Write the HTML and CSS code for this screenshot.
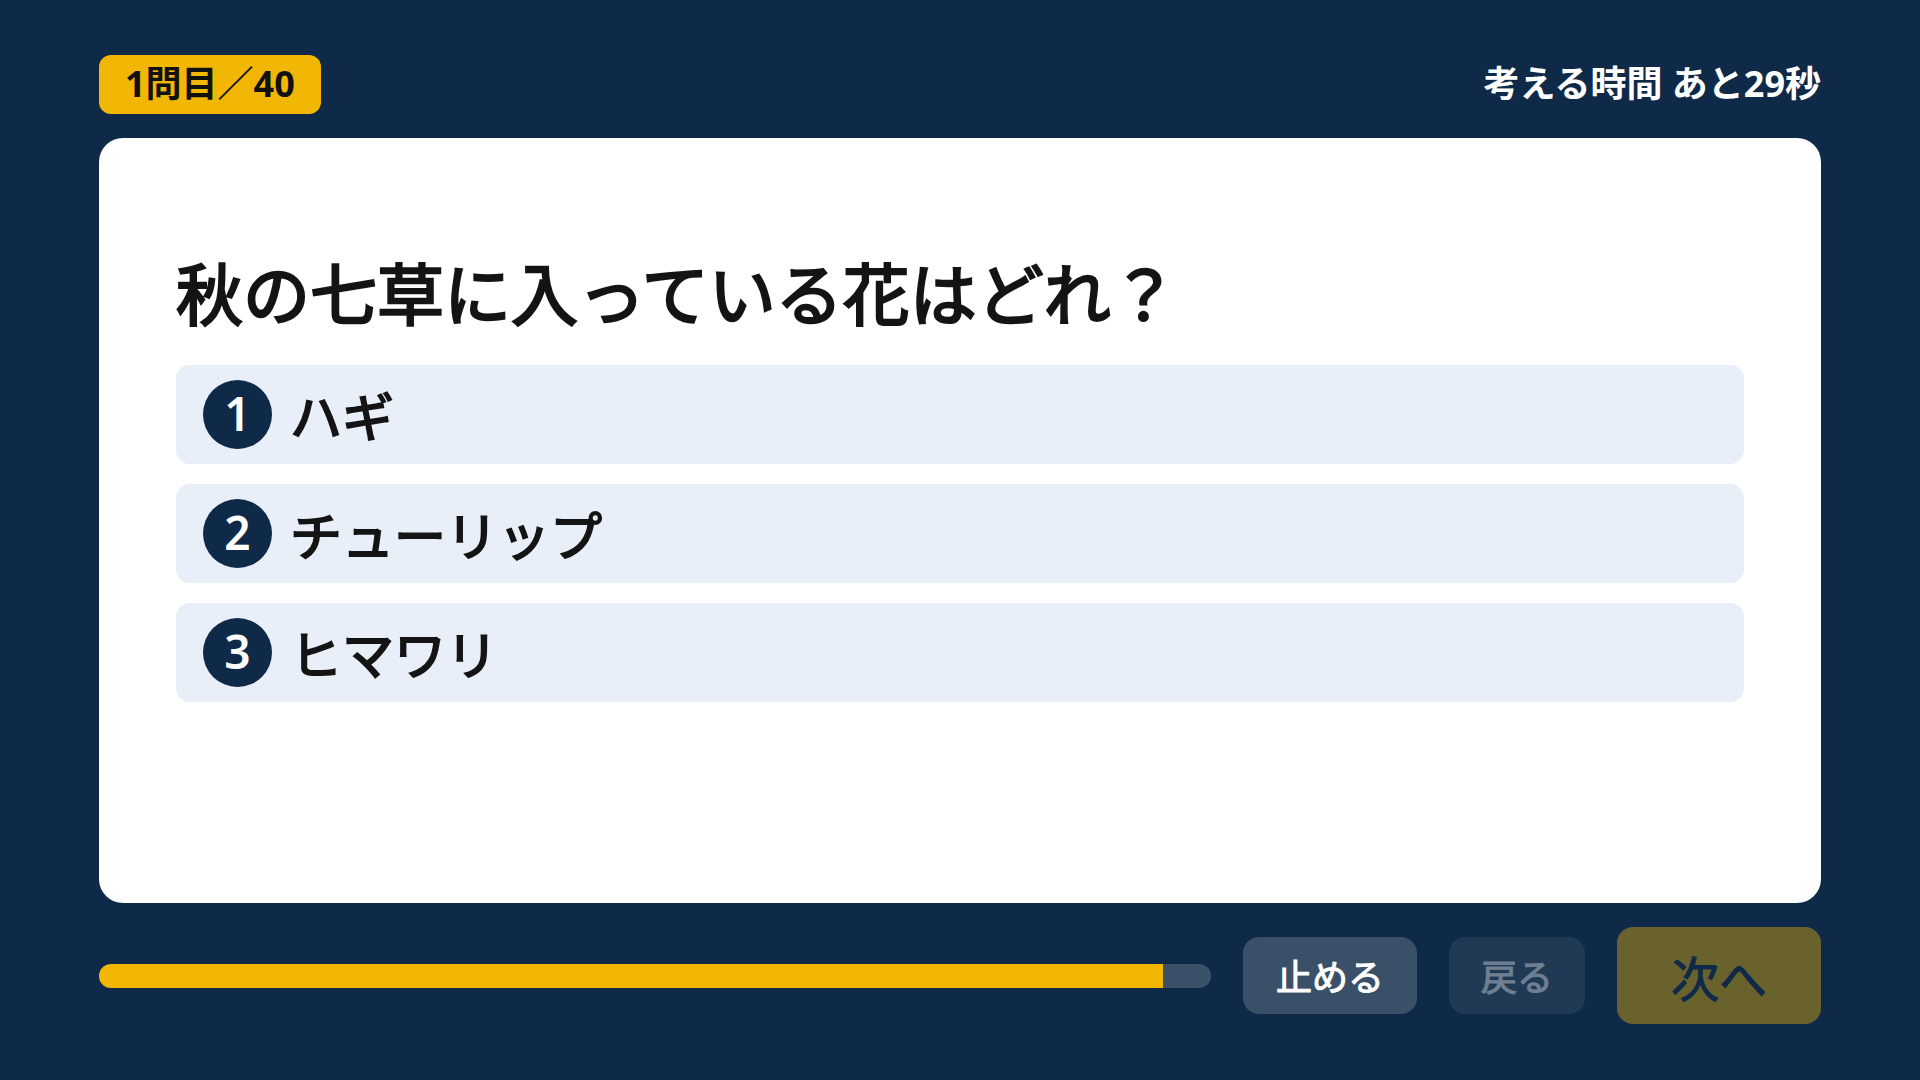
FILE: index.html
```html
<!DOCTYPE html>
<html lang="ja">
<head>
<meta charset="utf-8">
<title>クイズ</title>
<link rel="stylesheet" href="styles.css">
</head>
<body>
<div class="screen">
  <header class="topbar">
    <div class="badge">1問目／40</div>
    <div class="timer">考える時間 あと29秒</div>
  </header>
  <main class="card">
    <h1 class="question">秋の七草に入っている花はどれ？</h1>
    <ol class="options">
      <li class="option"><span class="num">1</span><span class="label">ハギ</span></li>
      <li class="option"><span class="num">2</span><span class="label">チューリップ</span></li>
      <li class="option"><span class="num">3</span><span class="label">ヒマワリ</span></li>
    </ol>
  </main>
  <footer class="bottombar">
    <div class="progress"><div class="fill" style="width:95.7%"></div></div>
    <button class="btn btn-stop">止める</button>
    <button class="btn btn-back" disabled>戻る</button>
    <button class="btn btn-next" disabled>次へ</button>
  </footer>
</div>
</body>
</html>
```
FILE: styles.css
```css
* { box-sizing: border-box; }
html, body {
  margin: 0;
  padding: 0;
  background: #0f2a48;
}
body {
  font-family: "Noto Sans", "Noto Sans CJK JP", sans-serif;
}
.screen {
  width: 1920px;
  height: 1080px;
  padding: 55px 99px 56px;
  display: flex;
  flex-direction: column;
  gap: 24px;
}
.topbar {
  height: 59px;
  display: flex;
  align-items: center;
  justify-content: space-between;
}
.badge {
  height: 59px;
  display: flex;
  align-items: center;
  padding: 0 26px 7px;
  background: #f2b705;
  color: #111;
  border-radius: 12px;
  font-size: 36px;
  font-weight: 700;
}
.timer {
  padding-bottom: 6px;
  color: #fff;
  font-size: 36px;
  font-weight: 700;
}
.card {
  flex: 1;
  background: #fff;
  border-radius: 24px;
  padding: 107px 77px 0;
}
.question {
  margin: 0 0 28px;
  font-family: "Noto Sans CJK JP", sans-serif;
  font-size: 67px;
  line-height: 92px;
  font-weight: 400;
  color: #141414;
  -webkit-text-stroke: 2.4px #141414;
}
.options {
  list-style: none;
  margin: 0;
  padding: 0;
  display: flex;
  flex-direction: column;
  gap: 20px;
}
.option {
  height: 99px;
  display: flex;
  align-items: center;
  gap: 18px;
  padding: 0 27px;
  background: #e8eff8;
  border-radius: 14px;
}
.num {
  width: 69px;
  height: 69px;
  border-radius: 50%;
  background: #0f2a48;
  color: #fff;
  display: flex;
  align-items: center;
  justify-content: center;
  padding-bottom: 3px;
  font-size: 46px;
  font-weight: 600;
}
.label {
  font-family: "Noto Sans CJK JP", sans-serif;
  font-size: 52px;
  font-weight: 400;
  color: #141414;
  -webkit-text-stroke: 1.9px #141414;
}
.bottombar {
  height: 97px;
  display: flex;
  align-items: center;
  gap: 32px;
}
.progress {
  flex: 1;
  height: 24px;
  border-radius: 12px;
  background: #3a5068;
  overflow: hidden;
}
.fill {
  height: 100%;
  background: #f2b705;
}
.btn {
  font-family: inherit;
  border: 0;
  height: 77px;
  padding: 0 33px;
  border-radius: 16px;
  background: #3a5068;
  color: #fff;
  font-size: 36px;
  font-weight: 400;
  -webkit-text-stroke: 1px currentColor;
}
.btn-back {
  padding: 0 32px;
  opacity: 0.4;
}
.btn-next {
  height: 97px;
  padding: 0 54px;
  font-size: 48px;
  background: #f2b705;
  color: #0f2a48;
  opacity: 0.4;
}
```
